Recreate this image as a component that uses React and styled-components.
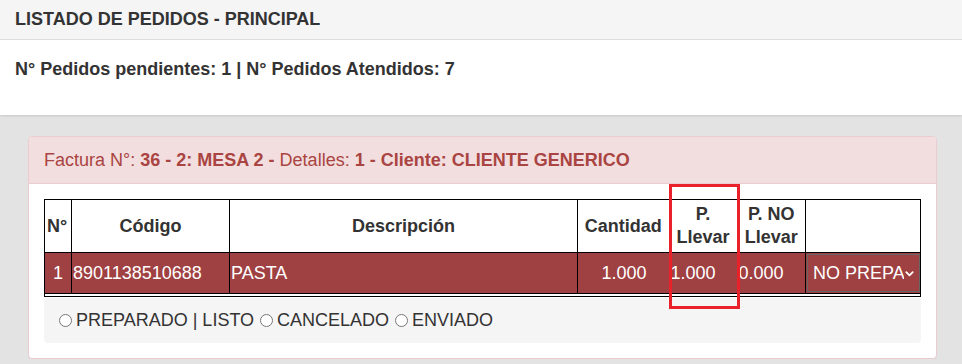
import React from 'react'
import styled, { createGlobalStyle } from 'styled-components'

const colors = {
  text: '#333',
  danger: '#a94442',
  dangerBg: '#f2dede',
  dangerBorder: '#ebccd1',
  row: '#9f4042',
  page: '#e3e3e3',
  well: '#f5f5f5',
}

const GlobalStyle = createGlobalStyle`
  html, body {
    margin: 0;
    padding: 0;
    background: ${colors.page};
    font-family: "Liberation Sans", Arial, sans-serif;
    font-size: 18px;
    color: ${colors.text};
  }
`

const Top = styled.div`
  background: #fff;
  box-shadow: 0 1px 2px rgba(0, 0, 0, 0.12);
`

const TitleBar = styled.div`
  background: #f5f5f5;
  border-bottom: 1px solid #ddd;
  padding: 0 15px;
  height: 39px;
  display: flex;
  align-items: center;
  font-weight: bold;
`

const Summary = styled.div`
  padding: 18px 15px 0;
  height: 57px;
  font-weight: bold;
  line-height: 22px;
`

const Content = styled.div`
  padding: 21px 25px 0 28px;
`

const Panel = styled.div`
  position: relative;
  background: #fff;
  border: 1px solid ${colors.dangerBorder};
  border-radius: 4px;
  box-shadow: 0 1px 1px rgba(0, 0, 0, 0.05);
`

const PanelHeading = styled.div`
  background: ${colors.dangerBg};
  border-bottom: 1px solid ${colors.dangerBorder};
  border-radius: 3px 3px 0 0;
  color: ${colors.danger};
  padding: 0 15px;
  height: 46px;
  display: flex;
  align-items: center;
  white-space: pre;
`

const PanelBody = styled.div`
  padding: 15px;
`

const Table = styled.table`
  width: 100%;
  border-collapse: collapse;
  border: 1px solid #000;
  table-layout: fixed;
`

const Th = styled.th`
  font-weight: bold;
  text-align: ${p => p.$align || 'center'};
  border-left: ${p => (p.$noLeft ? 'none' : '1px solid #000')};
  height: 52px;
  padding: 0 2px;
  line-height: 23px;
  vertical-align: middle;
`

const DataRow = styled.tr`
  background: ${colors.row};
  color: #fff;
  border-top: 1px solid #000;
  border-bottom: 1px solid #000;
`

const Td = styled.td`
  text-align: ${p => p.$align || 'left'};
  border-left: ${p => (p.$noLeft ? 'none' : '1px solid #000')};
  height: 40px;
  padding: ${p => p.$pad || '0 1px'};
  vertical-align: middle;
  white-space: nowrap;
  overflow: hidden;
`

const Spacer = styled.tr`
  height: 3px;
`

const Select = styled.div`
  box-sizing: border-box;
  height: 38px;
  margin: 0 0 0 1px;
  border: 1px solid #666;
  background: ${colors.row};
  color: #fff;
  display: flex;
  align-items: center;
  padding: 0 4px 0 5px;
`

const SelectText = styled.span`
  flex: 1;
  overflow: hidden;
  white-space: nowrap;
  padding-right: 3px;
`

const Well = styled.div`
  margin-top: 1px;
  background: ${colors.well};
  border-radius: 0 0 4px 4px;
  padding: 0 15px 0 14px;
  height: 45px;
  display: flex;
  align-items: center;
  white-space: pre;
`

const Radio = styled.span`
  display: inline-block;
  box-sizing: border-box;
  width: 13px;
  height: 13px;
  border: 1px solid #777;
  border-radius: 50%;
  background: #fff;
  margin: 0 4px 0 1px;
`

const Highlight = styled.div`
  position: absolute;
  left: 640px;
  top: 47px;
  width: 71px;
  height: 125px;
  box-sizing: border-box;
  border: 3px solid #e8212b;
  pointer-events: none;
`

const Chevron = () => (
  <svg width="11" height="11" viewBox="0 0 12 12" fill="none" stroke="#fff" strokeWidth="2" strokeLinecap="round" strokeLinejoin="round">
    <path d="M2.5 4.5 L6 8 L9.5 4.5" />
  </svg>
)

export default function App() {
  return (
    <>
      <GlobalStyle />
      <Top>
        <TitleBar>LISTADO DE PEDIDOS - PRINCIPAL</TitleBar>
        <Summary>N° Pedidos pendientes: 1 | N° Pedidos Atendidos: 7</Summary>
      </Top>
      <Content>
        <Panel>
          <PanelHeading>
            Factura N°: <b>36 - 2: MESA 2 -</b> Detalles: <b>1 - Cliente: CLIENTE GENERICO</b>
          </PanelHeading>
          <PanelBody>
            <Table>
              <colgroup>
                <col style={{ width: 27 }} />
                <col style={{ width: 158 }} />
                <col style={{ width: 348 }} />
                <col style={{ width: 91 }} />
                <col style={{ width: 69 }} />
                <col style={{ width: 68 }} />
                <col />
              </colgroup>
              <thead>
                <tr>
                  <Th $noLeft $align="left">N°</Th>
                  <Th>Código</Th>
                  <Th>Descripción</Th>
                  <Th>Cantidad</Th>
                  <Th $noLeft>P.<br />Llevar</Th>
                  <Th $noLeft>P. NO<br />Llevar</Th>
                  <Th></Th>
                </tr>
              </thead>
              <tbody>
                <DataRow>
                  <Td $noLeft $align="center">1</Td>
                  <Td>8901138510688</Td>
                  <Td>PASTA</Td>
                  <Td $align="right" $pad="0 22px 0 0">1.000</Td>
                  <Td $noLeft $pad="0 0 0 2px">1.000</Td>
                  <Td $noLeft $pad="0 0 0 1px">0.000</Td>
                  <Td $pad="0">
                    <Select>
                      <SelectText>NO PREPARADO</SelectText>
                      <Chevron />
                    </Select>
                  </Td>
                </DataRow>
                <Spacer><td colSpan={7} /></Spacer>
              </tbody>
            </Table>
            <Well>
              <Radio />PREPARADO | LISTO <Radio />CANCELADO <Radio />ENVIADO
            </Well>
          </PanelBody>
          <Highlight />
        </Panel>
      </Content>
    </>
  )
}
